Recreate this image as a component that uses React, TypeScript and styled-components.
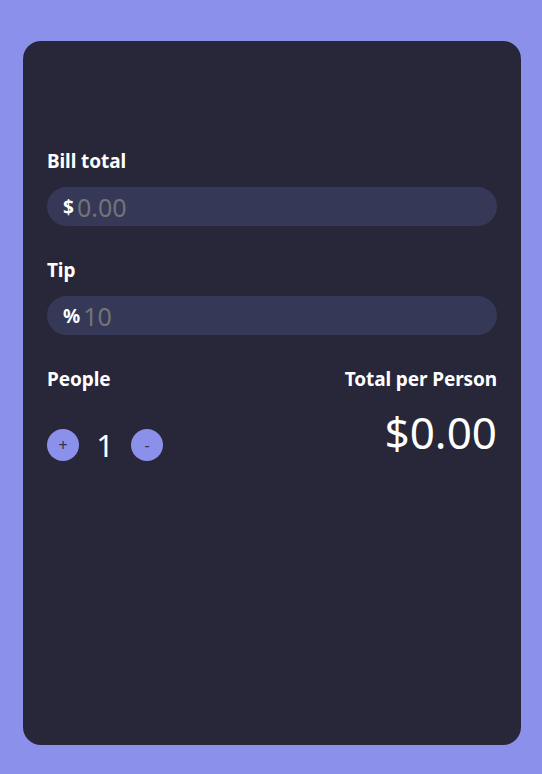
import { useState } from "react";
import styled, { createGlobalStyle } from "styled-components";

const GlobalStyle = createGlobalStyle`
  html, body {
    margin: 0;
    padding: 0;
    background: #8b90ea;
    font-family: "Noto Sans", "Open Sans", sans-serif;
  }
`;

const Page = styled.div`
  min-height: 774px;
  box-sizing: border-box;
  padding: 41px 21px 29px 23px;
  display: flex;
`;

const Card = styled.div`
  flex: 1;
  background: #282739;
  border-radius: 18px;
  padding: 107px 24px 24px;
  display: flex;
  flex-direction: column;
  color: #fff;
`;

const Field = styled.div`
  display: flex;
  flex-direction: column;
  gap: 13px;
  margin-bottom: 31px;
`;

const Label = styled.label`
  font-size: 19px;
  font-weight: 700;
  line-height: 26px;
  letter-spacing: -0.1px;
  color: #fff;
`;

const InputBox = styled.div`
  display: flex;
  align-items: center;
  height: 39px;
  border-radius: 20px;
  background: #353857;
  padding: 0 16px;
`;

const Prefix = styled.span`
  font-size: 19px;
  font-weight: 700;
  margin-right: 3px;
`;

const Input = styled.input`
  flex: 1;
  border: none;
  outline: none;
  background: transparent;
  color: #fff;
  font-family: "Noto Sans", sans-serif;
  font-size: 25px;
  padding: 0;
  &::placeholder {
    color: #737378;
  }
`;

const Bottom = styled.div`
  display: flex;
  justify-content: space-between;
`;

const Column = styled.div<{ $right?: boolean }>`
  display: flex;
  flex-direction: column;
  align-items: ${({ $right }) => ($right ? "flex-end" : "flex-start")};
`;

const Counter = styled.div`
  display: flex;
  align-items: center;
  gap: 16px;
  margin-top: 37px;
`;

const RoundButton = styled.button`
  width: 32px;
  height: 32px;
  border-radius: 50%;
  border: none;
  background: #8b90ea;
  color: #34334a;
  font-family: "Noto Sans", sans-serif;
  font-size: 16px;
  padding: 0;
  display: flex;
  align-items: center;
  justify-content: center;
  cursor: pointer;
`;

const Count = styled.span`
  font-size: 31px;
  line-height: 32px;
  min-width: 20px;
  text-align: center;
`;

const Total = styled.div`
  margin-top: 16px;
  font-size: 44px;
  line-height: 48px;
`;

export default function App() {
  const [bill, setBill] = useState("");
  const [tip, setTip] = useState("");
  const [people, setPeople] = useState(1);

  const b = parseFloat(bill) || 0;
  const t = tip === "" ? 10 : parseFloat(tip) || 0;
  const perPerson = (b * (1 + t / 100)) / people;

  return (
    <>
      <GlobalStyle />
      <Page>
        <Card>
          <Field>
            <Label>Bill total</Label>
            <InputBox>
              <Prefix>$</Prefix>
              <Input
                placeholder="0.00"
                value={bill}
                onChange={(e) => setBill(e.target.value)}
              />
            </InputBox>
          </Field>
          <Field>
            <Label>Tip</Label>
            <InputBox>
              <Prefix>%</Prefix>
              <Input
                placeholder="10"
                value={tip}
                onChange={(e) => setTip(e.target.value)}
              />
            </InputBox>
          </Field>
          <Bottom>
            <Column>
              <Label>People</Label>
              <Counter>
                <RoundButton onClick={() => setPeople(people + 1)}>+</RoundButton>
                <Count>{people}</Count>
                <RoundButton onClick={() => setPeople(Math.max(1, people - 1))}>-</RoundButton>
              </Counter>
            </Column>
            <Column $right>
              <Label>Total per Person</Label>
              <Total>${perPerson.toFixed(2)}</Total>
            </Column>
          </Bottom>
        </Card>
      </Page>
    </>
  );
}
